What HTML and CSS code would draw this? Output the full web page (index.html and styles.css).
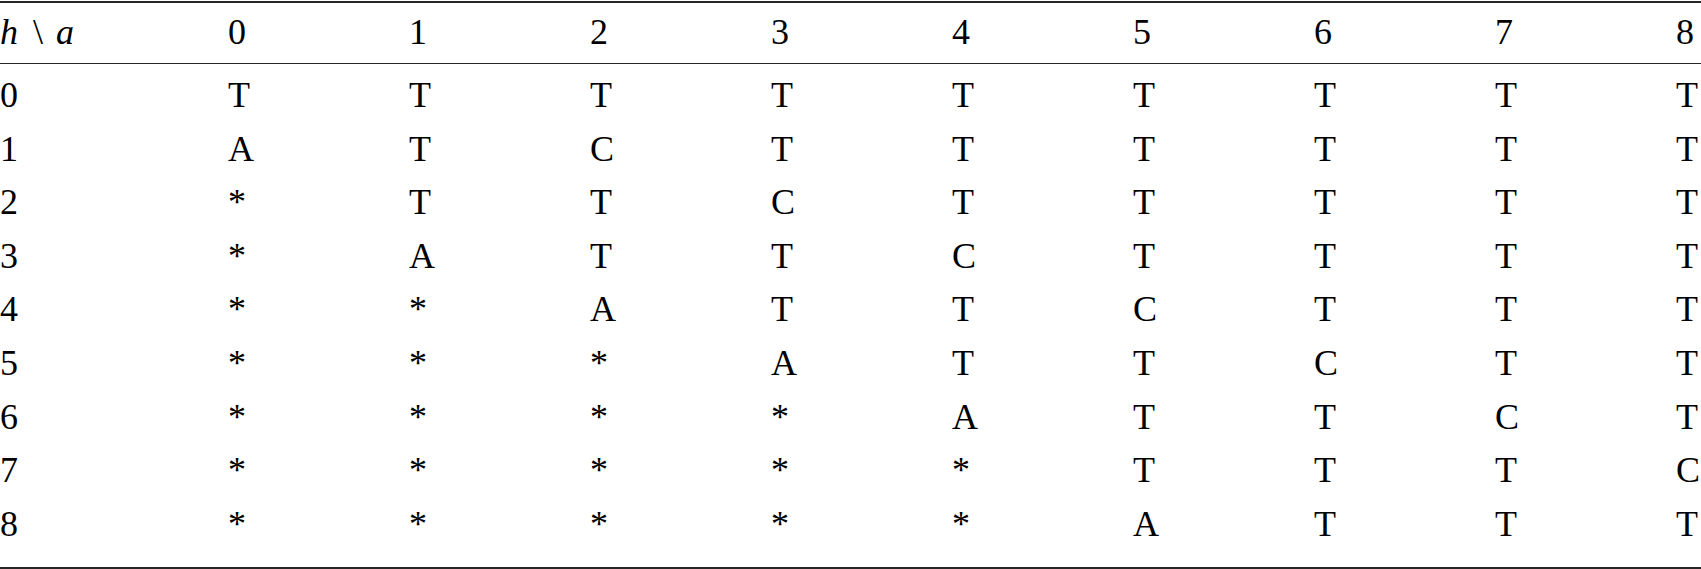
FILE: index.html
```html
<!DOCTYPE html>
<html>
<head>
<meta charset="utf-8">
<link rel="stylesheet" href="styles.css">
</head>
<body>
<table class="tbl">
  <colgroup>
    <col class="c-label">
    <col class="c-data"><col class="c-data"><col class="c-data"><col class="c-data">
    <col class="c-data"><col class="c-data"><col class="c-data"><col class="c-data">
    <col class="c-last">
  </colgroup>
  <thead>
    <tr>
      <th><i>h</i><span class="setminus">\</span><i>a</i></th>
      <th>0</th><th>1</th><th>2</th><th>3</th><th>4</th><th>5</th><th>6</th><th>7</th><th>8</th>
    </tr>
  </thead>
  <tbody>
    <tr class="first"><td>0</td><td>T</td><td>T</td><td>T</td><td>T</td><td>T</td><td>T</td><td>T</td><td>T</td><td>T</td></tr>
    <tr><td>1</td><td>A</td><td>T</td><td>C</td><td>T</td><td>T</td><td>T</td><td>T</td><td>T</td><td>T</td></tr>
    <tr><td>2</td><td>*</td><td>T</td><td>T</td><td>C</td><td>T</td><td>T</td><td>T</td><td>T</td><td>T</td></tr>
    <tr><td>3</td><td>*</td><td>A</td><td>T</td><td>T</td><td>C</td><td>T</td><td>T</td><td>T</td><td>T</td></tr>
    <tr><td>4</td><td>*</td><td>*</td><td>A</td><td>T</td><td>T</td><td>C</td><td>T</td><td>T</td><td>T</td></tr>
    <tr><td>5</td><td>*</td><td>*</td><td>*</td><td>A</td><td>T</td><td>T</td><td>C</td><td>T</td><td>T</td></tr>
    <tr><td>6</td><td>*</td><td>*</td><td>*</td><td>*</td><td>A</td><td>T</td><td>T</td><td>C</td><td>T</td></tr>
    <tr><td>7</td><td>*</td><td>*</td><td>*</td><td>*</td><td>*</td><td>T</td><td>T</td><td>T</td><td>C</td></tr>
    <tr class="last"><td>8</td><td>*</td><td>*</td><td>*</td><td>*</td><td>*</td><td>A</td><td>T</td><td>T</td><td>T</td></tr>
  </tbody>
</table>
</body>
</html>
```

FILE: styles.css
```css
html, body {
  margin: 0;
  padding: 0;
  background: #ffffff;
}

body {
  padding-top: 1px;
  overflow: hidden;
}

.tbl {
  width: 100%;
  border-collapse: collapse;
  table-layout: fixed;
  font-family: "Liberation Serif", "Times New Roman", serif;
  font-size: 36px;
  color: #000000;
}

.c-label { width: 228px; }
.c-data { width: 181px; }
.c-last { width: auto; }

.tbl th,
.tbl td {
  padding: 0;
  text-align: left;
  font-weight: normal;
  white-space: nowrap;
  vertical-align: baseline;
}

.tbl thead tr {
  border-top: 2px solid #262626;
  border-bottom: 1px solid #262626;
}

.tbl th {
  line-height: 40px;
  padding-top: 8.5px;
  padding-bottom: 11.5px;
}

.tbl td {
  line-height: 53.6px;
}

.tbl tr.first td {
  padding-top: 5px;
}

.tbl tr.last td {
  padding-bottom: 16px;
}

.tbl tbody tr.last {
  border-bottom: 2px solid #262626;
}

.setminus {
  margin: 0 13px 0 15px;
}
```
